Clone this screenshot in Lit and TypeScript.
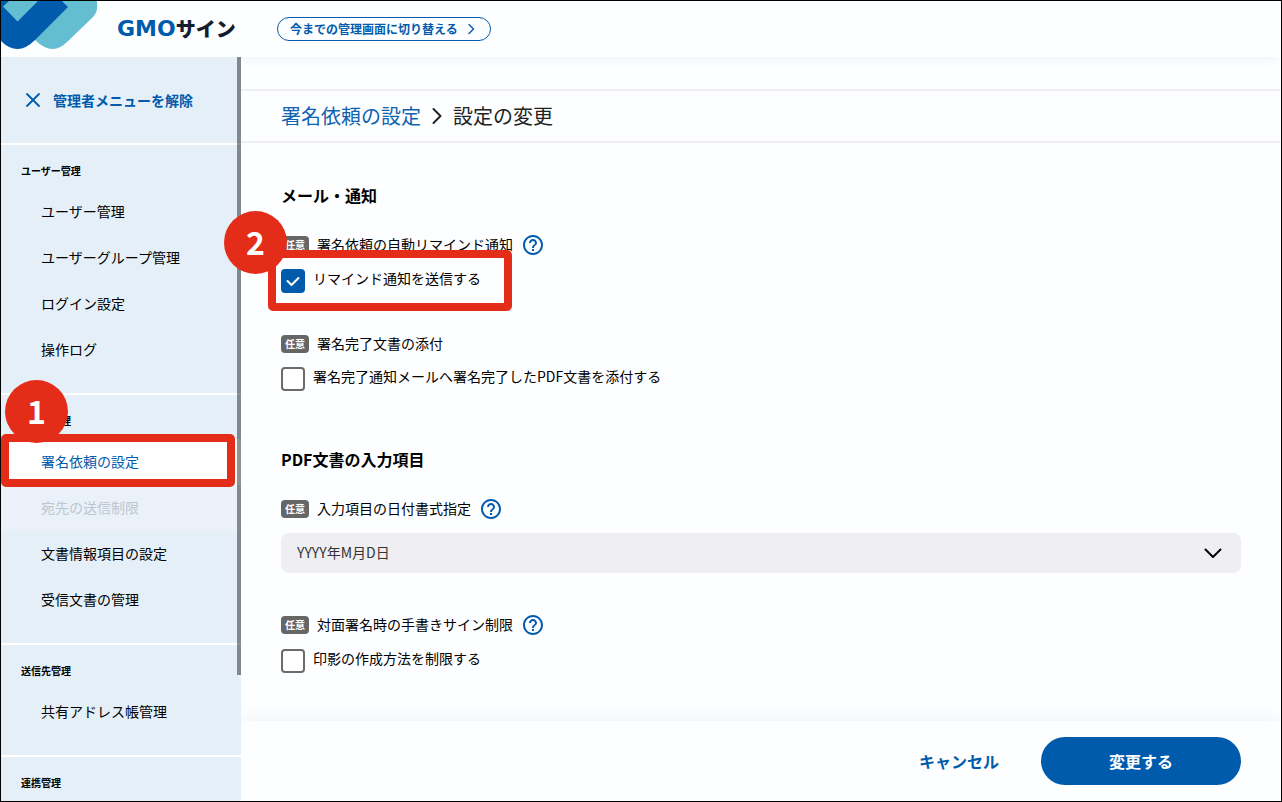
import { LitElement, html, css, svg, nothing } from "lit";
import { customElement, state } from "lit/decorators.js";

interface MenuItem {
  label: string;
  current?: boolean;
  disabled?: boolean;
}

interface MenuSection {
  title: string;
  items: MenuItem[];
}

const sections: MenuSection[] = [
  {
    title: "ユーザー管理",
    items: [
      { label: "ユーザー管理" },
      { label: "ユーザーグループ管理" },
      { label: "ログイン設定" },
      { label: "操作ログ" },
    ],
  },
  {
    title: "文書の管理",
    items: [
      { label: "署名依頼の設定", current: true },
      { label: "宛先の送信制限", disabled: true },
      { label: "文書情報項目の設定" },
      { label: "受信文書の管理" },
    ],
  },
  { title: "送信先管理", items: [{ label: "共有アドレス帳管理" }] },
  { title: "連携管理", items: [] },
];

const stroke = (d: string, width = 2) =>
  svg`<path d=${d} fill="none" stroke="currentColor" stroke-width=${width} stroke-linecap="round" stroke-linejoin="round" />`;

@customElement("app-root")
export class AppRoot extends LitElement {
  @state() private remind = true;

  static styles = css`
    :host {
      --blue: #005bac;
      --red: #e42d18;
      --pale: #e4eff8;
      --line: #efeff2;
      --page: #fdfeff;
      display: block;
      color: #000;
      font: 14px/20px "Noto Sans CJK JP", sans-serif;
    }
    *,
    *::before,
    *::after {
      box-sizing: border-box;
    }
    a {
      color: inherit;
      text-decoration: none;
    }
    button,
    select {
      font: inherit;
      color: inherit;
      border: 0;
      background: none;
      padding: 0;
      margin: 0;
      cursor: pointer;
    }
    svg {
      display: block;
      flex: none;
    }
    .shell {
      display: grid;
      grid-template: 56px minmax(0, 1fr) / 240px minmax(0, 1fr);
      height: 100vh;
      border: 1px solid #000;
      background: var(--page);
      overflow: hidden;
    }
    .header {
      grid-column: 1 / -1;
      position: relative;
      z-index: 2;
      display: flex;
      align-items: center;
      background: var(--page);
      box-shadow: 0 0 12px rgba(20, 40, 80, 0.08);
    }
    .mark {
      align-self: flex-start;
      width: 97px;
      height: 49px;
    }
    .brand {
      display: flex;
      align-items: center;
      width: 160px;
      margin-left: 19px;
      line-height: 20px;
      font-weight: 900;
      white-space: nowrap;
    }
    .brand-gmo {
      color: var(--blue);
      font-family: "DejaVu Sans", sans-serif;
      font-size: 22px;
      font-weight: 700;
    }
    .brand-sign {
      color: #141c30;
      font-size: 20px;
    }
    .switch {
      display: flex;
      align-items: center;
      gap: 6px;
      height: 24px;
      padding: 0 12px;
      border: 1px solid var(--blue);
      border-radius: 12px;
      color: var(--blue);
      font-size: 12px;
      font-weight: 700;
    }
    .sidebar {
      position: relative;
      z-index: 3;
      overflow: hidden;
      background: var(--pale);
    }
    .scrollbar {
      position: absolute;
      top: 0;
      right: 0;
      width: 4px;
      height: 83%;
      background: rgba(0, 0, 0, 0.43);
    }
    .leave {
      display: flex;
      align-items: center;
      gap: 12px;
      width: 100%;
      height: 86px;
      padding: 0 24px;
      color: var(--blue);
      font-weight: 700;
    }
    .section {
      border-top: 2px solid #fff;
      padding: 16px 0 20px;
    }
    .section-title {
      margin: 0 0 8px;
      padding-left: 20px;
      font-size: 10px;
      line-height: 20px;
      font-weight: 700;
    }
    .menu {
      margin: 0;
      padding: 0;
      list-style: none;
    }
    .menu-item {
      position: relative;
    }
    .menu-link {
      display: block;
      padding: 12px 40px 14px;
    }
    .menu-link.current {
      background: #fff;
      color: var(--blue);
    }
    .menu-link.disabled {
      background: #eaf1f9;
      color: #bcc6cf;
    }
    .main {
      display: flex;
      flex-direction: column;
      min-height: 0;
    }
    .breadcrumb {
      display: flex;
      align-items: center;
      gap: 8px;
      margin-top: 32px;
      padding: 10px 40px;
      border: solid var(--line);
      border-width: 2px 0;
      font-size: 20px;
      line-height: 30px;
      color: #222;
    }
    .breadcrumb a {
      color: #0f63b0;
    }
    .form {
      flex: 1;
      display: flex;
      flex-direction: column;
      gap: 56px;
      padding: 40px;
    }
    .group {
      display: flex;
      flex-direction: column;
      gap: 40px;
    }
    .group-title {
      margin: 0 0 -14px;
      font-size: 16px;
      line-height: 24px;
      font-weight: 700;
    }
    .field {
      display: flex;
      flex-direction: column;
      gap: 12px;
    }
    .field-head {
      display: flex;
      align-items: center;
      gap: 8px;
      min-height: 22px;
    }
    .field-label {
      padding-bottom: 2px;
    }
    .tag {
      width: 28px;
      border-radius: 4px;
      background: #666;
      color: #fff;
      font-size: 10px;
      line-height: 18px;
      font-weight: 700;
      text-align: center;
    }
    .help {
      color: var(--blue);
    }
    .check-row {
      position: relative;
      display: flex;
      gap: 8px;
    }
    .check-label {
      line-height: 18px;
    }
    .check {
      display: grid;
    }
    .check > * {
      grid-area: 1 / 1;
    }
    .box {
      appearance: none;
      width: 24px;
      height: 24px;
      margin: 0;
      border: 2px solid #6b6b6b;
      border-radius: 4px;
      background: #fff;
    }
    .box:checked {
      border-color: var(--blue);
      background: var(--blue);
    }
    .tick {
      color: #fff;
      pointer-events: none;
    }
    .picker {
      display: grid;
      align-items: center;
    }
    .picker > * {
      grid-area: 1 / 1;
    }
    .select {
      appearance: none;
      width: 100%;
      height: 40px;
      padding: 0 48px 2px 16px;
      border-radius: 8px;
      background: #efeef2;
      color: #333;
    }
    .arrow {
      justify-self: end;
      margin-right: 16px;
      pointer-events: none;
    }
    .footer {
      position: relative;
      display: flex;
      justify-content: flex-end;
      align-items: center;
      gap: 42px;
      padding: 16px 40px;
      background: var(--page);
      box-shadow: 0 0 20px rgba(20, 40, 80, 0.06);
      font-size: 16px;
      font-weight: 700;
    }
    .cancel {
      color: var(--blue);
      font-weight: 700;
    }
    .submit {
      width: 200px;
      height: 48px;
      border-radius: 24px;
      background: var(--blue);
      color: #fff;
      font-weight: 700;
    }
    .frame,
    .step {
      position: absolute;
      z-index: 4;
      pointer-events: none;
    }
    .frame {
      border: 8px solid var(--red);
      border-radius: 5px;
    }
    .step {
      width: 63px;
      height: 63px;
      border-radius: 50%;
      background: var(--red);
      color: #fff;
      font-size: 32px;
      line-height: 60px;
      font-weight: 700;
      text-align: center;
    }
    .frame-menu {
      inset: -5px 6px -2px 0;
    }
    .step-menu {
      top: -59px;
      left: 4px;
    }
    .frame-check {
      top: -19px;
      left: -13px;
      width: 244px;
      height: 61px;
    }
    .step-check {
      top: -58px;
      left: -57px;
    }
  `;

  private renderItem(item: MenuItem) {
    const mode = item.current ? "current" : item.disabled ? "disabled" : "";
    return html`<li class="menu-item">
      <a
        class="menu-link ${mode}"
        href="#"
        aria-current=${item.current ? "page" : nothing}
        aria-disabled=${item.disabled ? "true" : nothing}
        >${item.label}</a
      >
      ${item.current
        ? html`<div class="frame frame-menu"></div>
            <div class="step step-menu">1</div>`
        : nothing}
    </li>`;
  }

  private renderHead(label: string, help = false, target?: string) {
    return html`<div class="field-head">
      <span class="tag">任意</span>
      ${target
        ? html`<label class="field-label" for=${target}>${label}</label>`
        : html`<span class="field-label">${label}</span>`}
      ${help
        ? html`<button class="help" type="button" aria-label="ヘルプ">
            <svg width="24" height="24" viewBox="0 0 24 24" fill="currentColor">
              <path
                d="M11 18h2v-2h-2v2zm1-16C6.48 2 2 6.48 2 12s4.480 10 10 10 10-4.480 10-10S17.520 2 12 2zm0 18c-4.410 0-8-3.590-8-8s3.590-8 8-8 8 3.590 8 8-3.590 8-8 8zm0-14c-2.210 0-4 1.790-4 4h2c0-1.100.9-2 2-2s2 .9 2 2c0 2-3 1.750-3 5h2c0-2.250 3-2.500 3-5 0-2.210-1.790-4-4-4z"
              />
            </svg>
          </button>`
        : nothing}
    </div>`;
  }

  render() {
    return html`
      <div class="shell">
        <header class="header">
          <svg class="mark" viewBox="1 1 97 49" aria-hidden="true">
            <path d="M1 1H97V8Q97 13 92 18L67 42Q60 49 53 49Q44 49 35 40L1 21Z" fill="#64bed2" />
            <path d="M1 1H9L3 6.500L17.500 21.500L38 1H62L68 7L35 40Q26 49 17.500 49Q9 49 1 41Z" fill="#005bac" />
          </svg>
          <a class="brand" href="#"><span class="brand-gmo">GMO</span><span class="brand-sign">サイン</span></a>
          <button class="switch" type="button">
            今までの管理画面に切り替える
            <svg width="14" height="14" viewBox="0 0 14 14">${stroke("M5 2.500L9.500 7L5 11.500", 1.4)}</svg>
          </button>
        </header>

        <nav class="sidebar">
          <button class="leave" type="button">
            <svg width="16" height="16" viewBox="0 0 16 16">${stroke("M2 2L14 14M14 2L2 14", 1.8)}</svg>
            管理者メニューを解除
          </button>
          ${sections.map(
            (s) => html`<section class="section">
              <h2 class="section-title">${s.title}</h2>
              <ul class="menu">
                ${s.items.map((i) => this.renderItem(i))}
              </ul>
            </section>`
          )}
          <div class="scrollbar"></div>
        </nav>

        <main class="main">
          <nav class="breadcrumb">
            <a href="#">署名依頼の設定</a>
            <svg width="16" height="20" viewBox="0 0 16 20">${stroke("M4.500 3L11.500 10L4.500 17")}</svg>
            <span>設定の変更</span>
          </nav>

          <form class="form">
            <section class="group">
              <h2 class="group-title">メール・通知</h2>
              <div class="field">
                ${this.renderHead("署名依頼の自動リマインド通知", true)}
                <div class="check-row">
                  <span class="check">
                    <input
                      class="box"
                      id="remind"
                      type="checkbox"
                      .checked=${this.remind}
                      @change=${(e: Event) => (this.remind = (e.target as HTMLInputElement).checked)}
                    />
                    ${this.remind
                      ? html`<svg class="tick" width="24" height="24" viewBox="0 0 24 24">
                          ${stroke("M6.500 12L10.500 16L17.500 9", 2)}
                        </svg>`
                      : nothing}
                  </span>
                  <label class="check-label" for="remind">リマインド通知を送信する</label>
                  <div class="frame frame-check"></div>
                  <div class="step step-check">2</div>
                </div>
              </div>
              <div class="field">
                ${this.renderHead("署名完了文書の添付")}
                <div class="check-row">
                  <input class="box" id="attach" type="checkbox" />
                  <label class="check-label" for="attach">署名完了通知メールへ署名完了したPDF文書を添付する</label>
                </div>
              </div>
            </section>

            <section class="group">
              <h2 class="group-title">PDF文書の入力項目</h2>
              <div class="field">
                ${this.renderHead("入力項目の日付書式指定", true, "date-format")}
                <div class="picker">
                  <select class="select" id="date-format">
                    <option>YYYY年M月D日</option>
                  </select>
                  <svg class="arrow" width="24" height="24" viewBox="0 0 24 24">${stroke("M4.500 8.500L12 16L19.500 8.500")}</svg>
                </div>
              </div>
              <div class="field">
                ${this.renderHead("対面署名時の手書きサイン制限", true)}
                <div class="check-row">
                  <input class="box" id="seal" type="checkbox" />
                  <label class="check-label" for="seal">印影の作成方法を制限する</label>
                </div>
              </div>
            </section>
          </form>

          <footer class="footer">
            <button class="cancel" type="button">キャンセル</button>
            <button class="submit" type="button">変更する</button>
          </footer>
        </main>
      </div>
    `;
  }
}
